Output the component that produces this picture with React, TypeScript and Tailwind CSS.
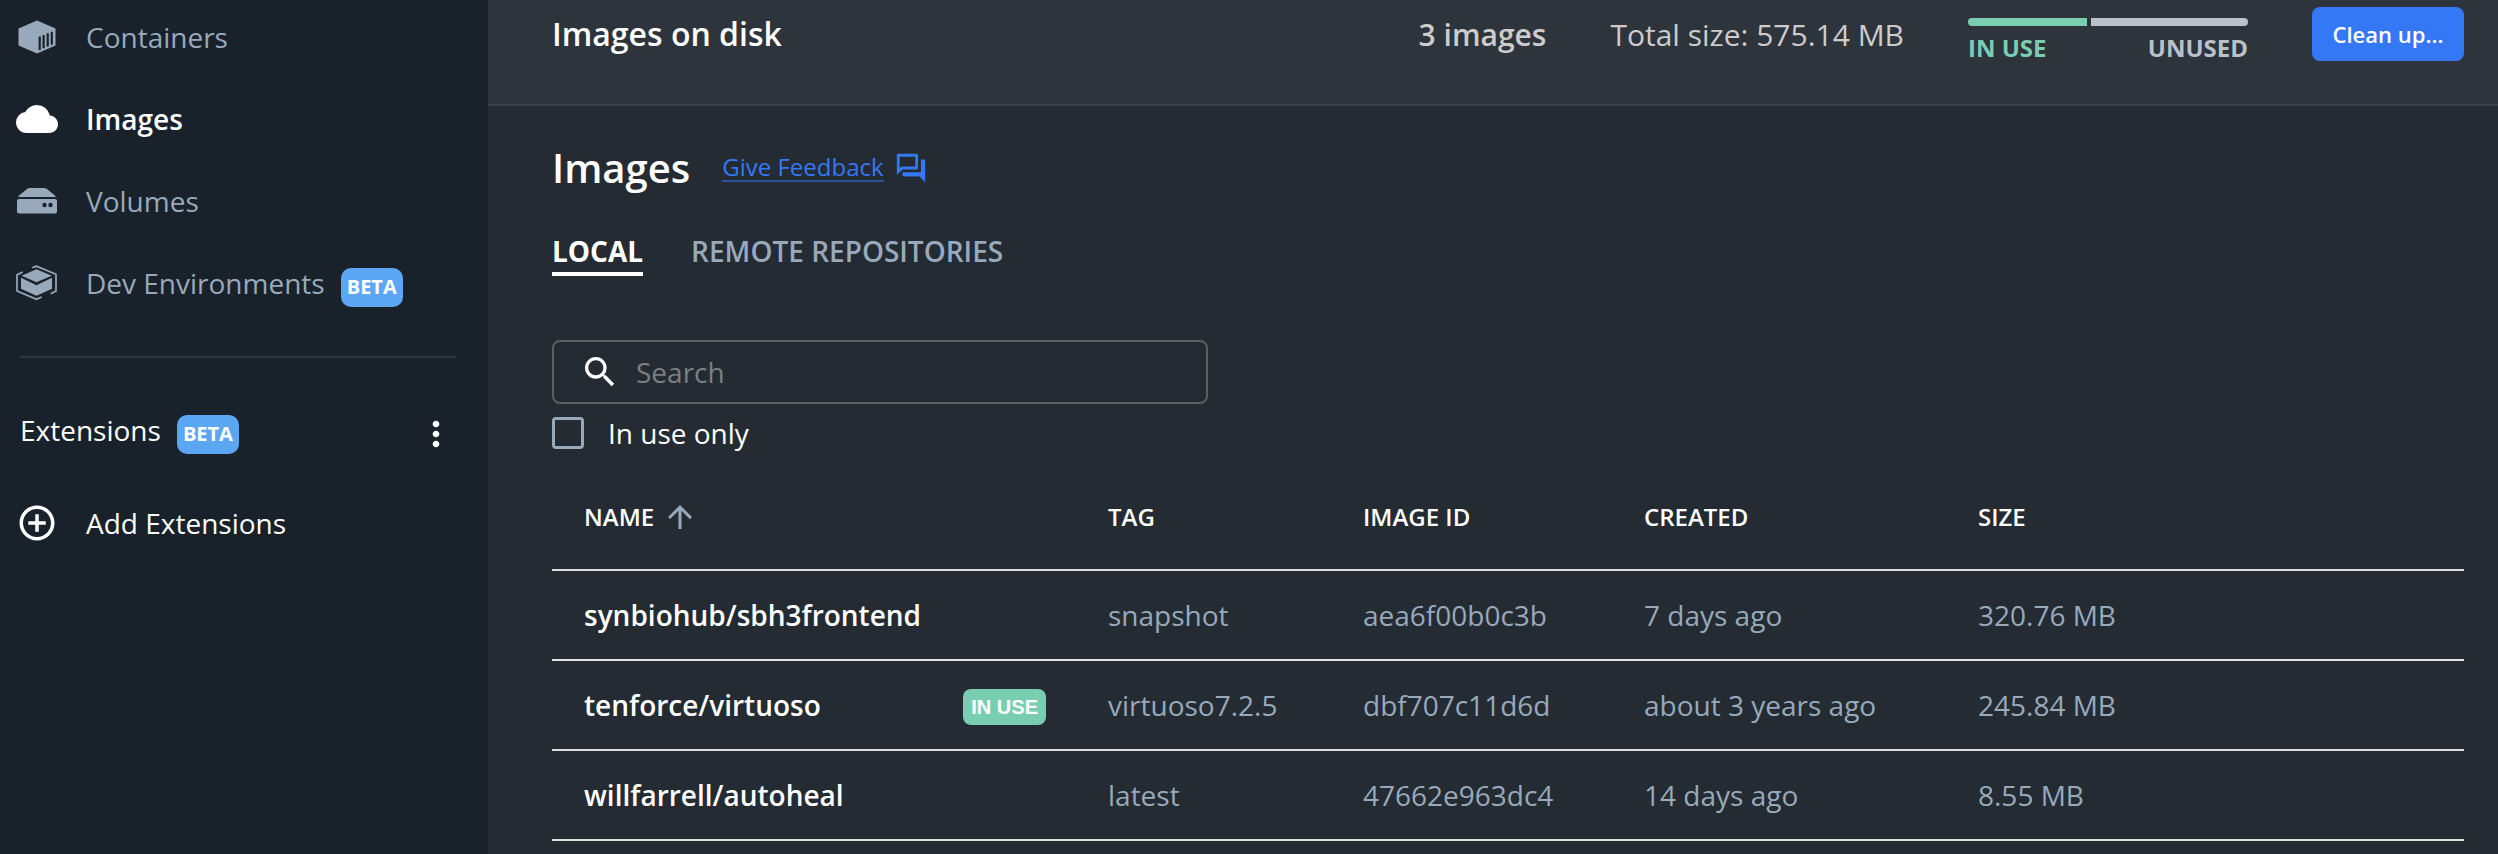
import type { ReactNode } from "react";
import { MdAddCircleOutline, MdArrowUpward, MdCloud, MdMoreVert, MdOutlineForum, MdSearch } from "react-icons/md";

function ContainerIcon() {
  return (
    <svg width="38" height="34" viewBox="0 0 38 34" fill="currentColor" aria-hidden="true">
      <path d="M19 .5 37.500 8.500V25.500L19 33.500.5 25.500V8.500Z" />
      <path d="M21.700 16.500V30M25.600 15V28.300M29.700 13.300V26.500M33.800 11.700V24.700" stroke="#19222a" strokeWidth="2.200" />
    </svg>
  );
}

function VolumeIcon() {
  return (
    <svg width="40" height="26" viewBox="0 0 40 26" fill="currentColor" aria-hidden="true">
      <path d="M10 1Q11.500 0 13 0H27Q28.500 0 30 1L38.500 8V9H1.500V8Z" />
      <rect y="11" width="40" height="14.500" rx="2" />
      <circle cx="27.500" cy="17" r="2.200" fill="#19222a" />
      <circle cx="33.500" cy="17" r="2.200" fill="#19222a" />
    </svg>
  );
}

function EnvironmentIcon() {
  return (
    <svg width="42" height="36" viewBox="0 0 42 36" fill="currentColor" aria-hidden="true">
      <path d="M20.500 4.300 35.700 10.700 20.500 17.300 5.500 10.700Z" />
      <path d="M5 12.700 20.500 20.300 36 12.700V23.700L20.500 30.700 5 23.700Z" />
      <path
        d="M16.300 2.600 20.500 1.100 40 9.300V26L34.700 28.700M6.700 7 1 9.700V26L20.500 34.300 25.700 32"
        fill="none"
        stroke="currentColor"
        strokeWidth="1.700"
      />
    </svg>
  );
}

function BetaBadge() {
  return (
    <span className="ml-4 pt-2">
      <span className="flex h-[39px] items-center rounded-[10px] bg-[#5ba7f3] px-[6px] text-[20px] font-bold text-white">
        BETA
      </span>
    </span>
  );
}

function NavItem({ icon, label, active, beta }: { icon: ReactNode; label: string; active?: boolean; beta?: boolean }) {
  return (
    <a
      href="#"
      aria-current={active ? "page" : undefined}
      className={
        active
          ? "flex h-[82px] items-center font-semibold text-white"
          : "flex h-[82px] items-center text-[#98a9bc]"
      }
    >
      <span className="flex w-[42px] justify-center">{icon}</span>
      <span className="ml-7">{label}</span>
      {beta && <BetaBadge />}
    </a>
  );
}

const rows = [
  { name: "synbiohub/sbh3frontend", inUse: false, tag: "snapshot", id: "aea6f00b0c3b", created: "7 days ago", size: "320.76 MB" },
  { name: "tenforce/virtuoso", inUse: true, tag: "virtuoso7.2.5", id: "dbf707c11d6d", created: "about 3 years ago", size: "245.84 MB" },
  { name: "willfarrell/autoheal", inUse: false, tag: "latest", id: "47662e963dc4", created: "14 days ago", size: "8.55 MB" },
];

export default function App() {
  return (
    <div className="flex min-h-screen bg-[#242b32] font-['Open_Sans',sans-serif] text-[28px] leading-[38px] text-white">
      <aside className="w-[488px] shrink-0 bg-[#19222a]">
        <nav className="-mt-1 pl-4" aria-label="Main">
          <NavItem icon={<ContainerIcon />} label="Containers" />
          <NavItem icon={<MdCloud size={42} />} label="Images" active />
          <NavItem icon={<VolumeIcon />} label="Volumes" />
          <NavItem icon={<EnvironmentIcon />} label="Dev Environments" beta />
        </nav>
        <hr className="mr-8 ml-5 mt-8 border-t-2 border-[#2c363e]" />
        <div className="mt-12 flex items-center pl-5">
          <span>Extensions</span>
          <BetaBadge />
          <button type="button" aria-label="Extension options" className="mr-8 ml-auto pt-2">
            <MdMoreVert size={40} />
          </button>
        </div>
        <a href="#" className="mt-12 flex items-center pl-4">
          <MdAddCircleOutline size={42} />
          <span className="ml-7">Add Extensions</span>
        </a>
      </aside>

      <main className="min-w-0 flex-1">
        <header className="flex h-[106px] items-start border-b-2 border-[#394149] bg-[#2d343b] pr-[34px] pl-16">
          <h2 className="mt-[14px] text-[32px] leading-[40px] font-semibold">Images on disk</h2>
          <p className="mt-4 ml-auto text-[30px] font-semibold text-[#cccccc]">3 images</p>
          <p className="mt-4 ml-16 text-[30px] text-[#cccccc]">Total size: 575.14 MB</p>
          <div className="mt-[18px] ml-16 w-[280px]">
            <div className="flex h-2 gap-1">
              <div className="w-[119px] rounded-l-full bg-[#79ceb2]" />
              <div className="flex-1 rounded-r-full bg-[#b9c1ca]" />
            </div>
            <div className="mt-1 flex justify-between text-[24px] leading-[36px] font-bold">
              <span className="text-[#79ceb2]">IN USE</span>
              <span className="text-[#b9c1ca]">UNUSED</span>
            </div>
          </div>
          <button type="button" className="mt-[7px] ml-16 h-[54px] w-[152px] rounded-lg bg-[#3578f6] text-[22px] font-semibold">
            Clean up...
          </button>
        </header>

        <section className="pr-[34px] pl-16">
          <div className="flex items-center pt-9">
            <h1 className="text-[40px] leading-[52px] font-semibold">Images</h1>
            <a href="#" className="ml-8 flex items-center gap-[10px] text-[24px] leading-[26px] text-[#3578f6]">
              <span className="border-b-2 border-[#2b519a]">Give Feedback</span>
              <MdOutlineForum size={34} />
            </a>
          </div>

          <div role="tablist" className="mt-[38px] flex gap-12">
            <button type="button" role="tab" aria-selected="true" className="border-b-4 border-white pb-[2px] font-bold">
              LOCAL
            </button>
            <button
              type="button"
              role="tab"
              aria-selected="false"
              className="border-b-4 border-transparent pb-[2px] font-semibold text-[#98a9bc]"
            >
              REMOTE REPOSITORIES
            </button>
          </div>

          <label className="mt-16 flex h-16 w-[656px] items-center gap-4 rounded-lg border-2 border-[#5a6065] pl-[26px]">
            <MdSearch size={40} />
            <input
              type="search"
              aria-label="Search"
              placeholder="Search"
              className="min-w-0 flex-1 bg-transparent outline-none placeholder:text-[#7b8085]"
            />
          </label>

          <label className="mt-[10px] flex w-fit items-center gap-6">
            <input type="checkbox" className="size-8 appearance-none rounded-[4px] border-3 border-[#98a9bc] checked:bg-[#98a9bc]" />
            In use only
          </label>

          <table className="mt-3 w-full table-fixed text-left">
            <colgroup>
              <col className="w-[524px]" />
              <col className="w-[255px]" />
              <col className="w-[281px]" />
              <col className="w-[334px]" />
              <col />
            </colgroup>
            <thead>
              <tr className="h-[106px] border-b-2 border-[#e0e0e0] text-[24px]">
                <th className="pl-8 font-semibold">
                  <button type="button" className="flex items-center gap-2">
                    NAME
                    <MdArrowUpward size={36} className="text-[#98a9bc]" />
                  </button>
                </th>
                <th className="pl-8 font-semibold">TAG</th>
                <th className="pl-8 font-semibold">IMAGE ID</th>
                <th className="pl-8 font-semibold">CREATED</th>
                <th className="pl-8 font-semibold">SIZE</th>
              </tr>
            </thead>
            <tbody className="text-[#98a9bc]">
              {rows.map((row) => (
                <tr key={row.id} className="h-[90px] border-b-2 border-[#e0e0e0]">
                  <td className="pl-8">
                    <div className="flex items-center justify-between pr-[30px]">
                      <span className="font-semibold text-white">{row.name}</span>
                      {row.inUse && (
                        <span className="mt-1 rounded-lg bg-[#79ceb2] px-2 font-['Liberation_Sans',sans-serif] text-[20px] leading-[36px] font-bold text-white">
                          IN USE
                        </span>
                      )}
                    </div>
                  </td>
                  <td className="pl-8">{row.tag}</td>
                  <td className="pl-8">{row.id}</td>
                  <td className="pl-8">{row.created}</td>
                  <td className="pl-8">{row.size}</td>
                </tr>
              ))}
            </tbody>
          </table>
        </section>
      </main>
    </div>
  );
}
